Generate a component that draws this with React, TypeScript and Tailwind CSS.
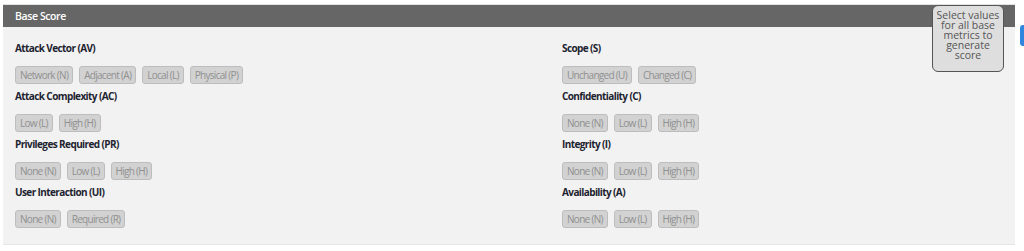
import React from 'react';

type Metric = { label: string; options: string[] };

const LEFT: Metric[] = [
  { label: 'Attack Vector (AV)', options: ['Network (N)', 'Adjacent (A)', 'Local (L)', 'Physical (P)'] },
  { label: 'Attack Complexity (AC)', options: ['Low (L)', 'High (H)'] },
  { label: 'Privileges Required (PR)', options: ['None (N)', 'Low (L)', 'High (H)'] },
  { label: 'User Interaction (UI)', options: ['None (N)', 'Required (R)'] },
];

const RIGHT: Metric[] = [
  { label: 'Scope (S)', options: ['Unchanged (U)', 'Changed (C)'] },
  { label: 'Confidentiality (C)', options: ['None (N)', 'Low (L)', 'High (H)'] },
  { label: 'Integrity (I)', options: ['None (N)', 'Low (L)', 'High (H)'] },
  { label: 'Availability (A)', options: ['None (N)', 'Low (L)', 'High (H)'] },
];

const MetricGroup = ({ m }: { m: Metric }) => (
  <div className="mb-[5px]">
    <div className="h-[15px] text-[10px] leading-[15px] font-bold text-[#1d2430] tracking-[-0.6px]">{m.label}</div>
    <div className="mt-[10px] flex gap-[6px]">
      {m.options.map(o => (
        <button
          key={o}
          disabled
          className="h-[18px] px-[4px] rounded-[3px] border border-[#bdbdbd] bg-[#d2d2d2] text-[10px] leading-[16px] text-[#909090] tracking-[-0.7px]"
        >
          {o}
        </button>
      ))}
    </div>
  </div>
);

export default function App() {
  return (
    <div className="relative w-[1024px] h-[251px] bg-white pt-[4px] font-['Open_Sans',sans-serif]">
      <div className="ml-[3px] w-[1012px] border-t border-[#e2e2e2] border-b border-b-[#e6e6e6]">
        <div className="h-[22px] bg-[#666666] px-[12px] text-[10.5px] leading-[22px] font-semibold text-white tracking-[-0.4px]">
          Base Score
        </div>
        <div className="flex bg-[#f2f2f2] pl-[12px] pt-[14px] pb-[11px]">
          <div className="w-[547px]">
            {LEFT.map(m => <MetricGroup key={m.label} m={m} />)}
          </div>
          <div>
            {RIGHT.map(m => <MetricGroup key={m.label} m={m} />)}
          </div>
        </div>
      </div>

      <div className="absolute left-[932px] top-[5px] w-[72px] h-[67px] rounded-[6px] border border-[#555] bg-[#dedede] pt-[4px] text-center text-[10.5px] leading-[10px] text-[#555]">
        Select values for all base metrics to generate score
      </div>

      <div className="absolute left-[1020px] top-[25px] w-[8px] h-[21px] rounded-[3px] bg-[#2e86de]" />
    </div>
  );
}
